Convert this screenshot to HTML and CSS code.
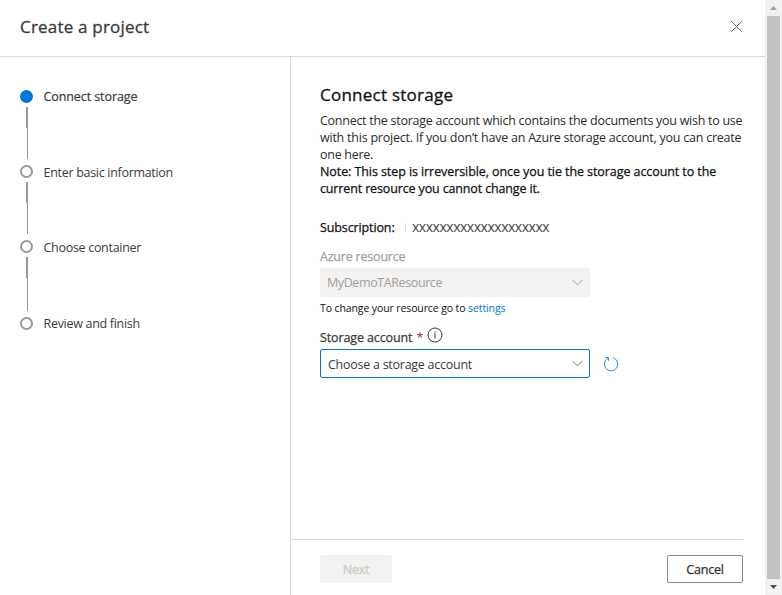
FILE: index.html
```html
<!DOCTYPE html>
<html lang="en">
<head>
<meta charset="utf-8">
<title>Create a project</title>
<link rel="stylesheet" href="styles.css">
</head>
<body>
<div class="window">
  <div class="panel">
    <header class="header">
      <h1 class="title">Create a project</h1>
      <svg class="close" viewBox="0 0 11 11" width="11" height="11"><path d="M0.3 0.3L10.7 10.7M10.7 0.3L0.3 10.7"/></svg>
    </header>
    <div class="body">
      <nav class="steps">
        <div class="step active"><div class="rail"><span class="dot"></span><span class="line-top"></span><span class="line-rest"></span></div><span class="step-name">Connect storage</span></div>
        <div class="step"><div class="rail"><span class="dot"></span><span class="line-top"></span><span class="line-rest"></span></div><span class="step-name lower">Enter basic information</span></div>
        <div class="step tall"><div class="rail"><span class="dot"></span><span class="line-top"></span><span class="line-rest"></span></div><span class="step-name lower">Choose container</span></div>
        <div class="step"><div class="rail"><span class="dot"></span></div><span class="step-name">Review and finish</span></div>
      </nav>
      <main class="main">
        <section class="content">
          <h2 class="heading">Connect storage</h2>
          <p class="text">Connect the storage account which contains the documents you wish to use<br><span class="loose">with this project. If you don’t have an Azure storage account, you can create</span><br>one here.</p>
          <p class="text note">Note: This step is irreversible, once you tie the storage account to the<br><span class="tight">current resource you cannot change it.</span></p>
          <div class="subscription"><span class="label sub-label">Subscription:</span><span class="sub-value">xxxxxxxxxxxxxxxxxxxx</span></div>
          <div class="label muted">Azure resource</div>
          <div class="select disabled"><span class="resource">MyDemoTAResource</span><svg class="chevron" viewBox="0 0 11 7" width="11" height="7"><path d="M0.3 0.7L5.5 5.9L10.7 0.7"/></svg></div>
          <p class="hint">To change your resource go to <a class="link">settings</a></p>
          <div class="label account-label"><span class="account-name">Storage account</span><span class="required">*</span><svg class="info" viewBox="0 0 16 16" width="16" height="16"><circle cx="8" cy="8" r="7"/><path d="M8 6.5V11.5M8 4.4V5.5"/></svg></div>
          <div class="account-row">
            <div class="select focused"><span class="choose">Choose a storage account</span><svg class="chevron" viewBox="0 0 11 7" width="11" height="7"><path d="M0.3 0.7L5.5 5.9L10.7 0.7"/></svg></div>
            <svg class="refresh" viewBox="0 0 16 16" width="16" height="16"><path d="M10.3 1.8A6.7 6.7 0 1 1 5 2.2M2.3 1.5H5.5V4.7"/></svg>
          </div>
        </section>
        <footer class="footer">
          <button class="button next" disabled>Next</button>
          <button class="button cancel">Cancel</button>
        </footer>
      </main>
    </div>
  </div>
  <div class="scrollbar">
    <svg class="arrow up" viewBox="0 0 7 4" width="7" height="4"><path d="M0 4L3.5 0L7 4Z"/></svg>
    <div class="thumb"></div>
    <svg class="arrow down" viewBox="0 0 7 4" width="7" height="4"><path d="M0 0L3.5 4L7 0Z"/></svg>
  </div>
</div>
</body>
</html>
```
FILE: styles.css
```css
* { box-sizing: border-box; }
body { margin: 0; background: #fff; font-family: "Open Sans", "Noto Sans", sans-serif; font-size: 12.5px; letter-spacing: -0.3px; color: #3b3a39; overflow: hidden; }
h1, h2, p { margin: 0; }
svg { display: block; flex: none; fill: none; }
.window { display: flex; width: 782px; height: 595px; white-space: nowrap; }
.panel { width: 765px; display: flex; flex-direction: column; }
.header { height: 57px; flex: none; border-bottom: 1px solid #d9d9d9; display: flex; justify-content: space-between; padding: 15px 23px 0 20px; }
.title { font-size: 17px; line-height: 24px; font-weight: 400; letter-spacing: 0.2px; -webkit-text-stroke: 0.3px; }
.close { margin-top: 6px; stroke: #605e5c; }
.body { display: flex; flex: 1; }
.steps { width: 291px; flex: none; border-right: 1px solid #d9d9d9; padding: 30px 0 0 20px; }
.step { display: flex; height: 75px; }
.step.tall { height: 77px; }
.rail { width: 13px; margin-right: 10.5px; display: flex; flex-direction: column; }
.dot { width: 13px; height: 13px; flex: none; margin: 3px 0 4px; border: 2px solid #999; border-radius: 50%; }
.active .dot { border: none; background: #0078d7; }
.line-top { width: 2px; height: 21px; margin-left: 6px; background: #999; }
.line-rest { width: 1px; flex: 1; margin: 0 0 3px 7px; background: #999; }
.step-name { line-height: 20px; }
.lower { padding-top: 1px; }
.active .step-name { letter-spacing: -0.09px; -webkit-text-stroke: 0.2px; }
.main { flex: 1; display: flex; flex-direction: column; padding: 0 22px 0 0; }
.content { flex: 1; padding: 25px 0 0 29px; }
.heading { font-size: 17px; line-height: 26px; font-weight: 400; letter-spacing: 0.25px; -webkit-text-stroke: 0.3px; color: #111; margin-bottom: 4px; }
.text { line-height: 17px; color: #2b2b2b; letter-spacing: -0.27px; }
.loose { letter-spacing: -0.23px; }
.note { letter-spacing: -0.08px; -webkit-text-stroke: 0.25px; color: #111; }
.tight { letter-spacing: -0.14px; }
.label { letter-spacing: -0.12px; -webkit-text-stroke: 0.25px; }
.subscription { display: flex; align-items: center; height: 20px; margin-top: 20px; }
.sub-label { width: 86px; height: 9px; line-height: 9px; border-right: 1px solid #e1e1e1; color: #111; }
.sub-value { margin-left: 6px; color: #444; font-size: 14px; line-height: 18px; letter-spacing: -0.47px; }
.muted { color: #a19f9d; line-height: 18px; margin-top: 11px; letter-spacing: -0.2px; }
.select { width: 270px; height: 29px; display: flex; align-items: center; justify-content: space-between; padding: 0 7px; border-radius: 2px; }
.disabled { background: #f3f2f1; color: #a19f9d; margin-top: 2px; }
.resource { letter-spacing: -0.4px; }
.focused { border: 1px solid #0078d4; padding: 0 6px 0 7px; }
.choose { padding-top: 2px; letter-spacing: -0.26px; }
.chevron { stroke: #a19f9d; }
.focused .chevron { stroke: #777; }
.hint { font-size: 10.5px; line-height: 16px; margin-top: 3px; color: #111; letter-spacing: -0.11px; }
.link { color: #0078d4; }
.account-label { display: flex; height: 20px; line-height: 20px; margin-top: 12px; }
.required { color: #a4262c; margin-left: 4px; -webkit-text-stroke: 0; }
.info { stroke: #323130; margin: -1px 0 0 4px; }
.account-row { display: flex; align-items: center; gap: 13px; margin-top: 1px; }
.refresh { stroke: #2b8fdc; }
.footer { height: 56px; border-top: 1px solid #d9d9d9; display: flex; justify-content: space-between; padding: 15px 0 0 29px; }
.button { height: 28px; padding: 1px 0 0; font: 400 12.5px/26px "Open Sans", sans-serif; letter-spacing: -0.2px; -webkit-text-stroke: 0.25px; border-radius: 2px; border: 1px solid #8a8886; background: #fff; color: #323130; }
.next { width: 72px; background: #f3f2f1; border-color: #f3f2f1; color: #d2d0ce; -webkit-text-stroke: 0.5px; }
.cancel { width: 76px; }
.scrollbar { width: 17px; background: #f1f1f1; display: flex; flex-direction: column; align-items: center; }
.arrow { margin: 6px 0; }
.up { fill: #a3a3a3; }
.down { fill: #505050; }
.thumb { width: 13px; flex: 1; background: #c1c1c1; }
```
